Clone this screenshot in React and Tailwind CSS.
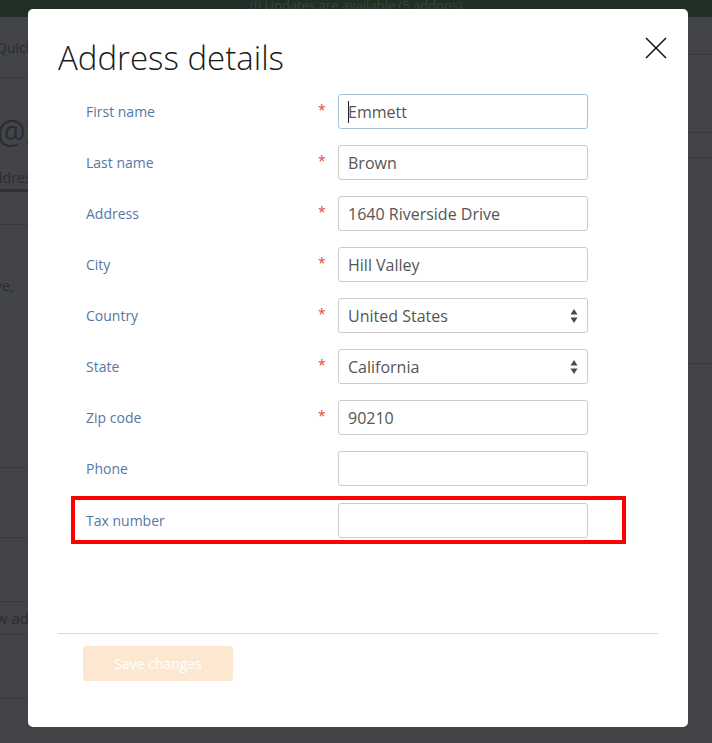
import React from 'react';

const fields = [
  { label: 'First name', value: 'Emmett', required: true, focused: true },
  { label: 'Last name', value: 'Brown', required: true },
  { label: 'Address', value: '1640 Riverside Drive', required: true },
  { label: 'City', value: 'Hill Valley', required: true },
  { label: 'Country', value: 'United States', required: true, select: true },
  { label: 'State', value: 'California', required: true, select: true },
  { label: 'Zip code', value: '90210', required: true },
  { label: 'Phone', value: '' },
];

// Flechas arriba/abajo del select nativo
const SelectArrows = () => (
  <svg width="8" height="16" viewBox="0 0 8 16" className="shrink-0">
    <path d="M4 1 L7.5 6.5 L0.5 6.5 Z" fill="#4a4a4a" />
    <path d="M4 15 L7.5 9.5 L0.5 9.5 Z" fill="#4a4a4a" />
  </svg>
);

const FieldRow = ({ field }) => (
  <div className="flex items-center h-[51px]">
    <label className="w-[232px] text-[14px] text-[#5677a3]">{field.label}</label>
    <span className="w-[20px] text-[14px] text-[#e8463c] leading-none -mt-[4px]">
      {field.required ? '*' : ''}
    </span>
    <div
      className={`w-[250px] h-[35px] rounded-[3px] border bg-white flex items-center pl-[9px] pr-[9px] ${
        field.focused ? 'border-[#a9c2d9]' : 'border-[#cccccc]'
      }`}
    >
      {field.focused && <span className="w-px h-[22px] bg-[#222] -mr-px" />}
      <span className="flex-1 text-[16px] text-[#555555]">{field.value}</span>
      {field.select && <SelectArrows />}
    </div>
  </div>
);

export default function App() {
  return (
    <div className="relative w-[712px] h-[743px] overflow-hidden bg-[#424448] font-['Open_Sans',sans-serif]">
      {/* Página de fondo (tapada por el modal) */}
      <div className="h-[17px] bg-[#222f26] flex justify-center items-start">
        <span className="text-[13px] text-[#38473c] -mt-[4px]">(!) Updates are available (5 addons)</span>
      </div>
      <div className="flex">
        <div className="w-[28px] shrink-0 overflow-hidden text-[#2a2c30]">
          <div className="h-[61px] border-b border-[#393b3f] flex items-center">
            <span className="text-[14px] whitespace-nowrap -ml-[4px]">Quick</span>
          </div>
          <div className="h-[70px] flex items-end">
            <span className="text-[32px] whitespace-nowrap -ml-[3px] leading-none">@x</span>
          </div>
          <div className="h-[44px] border-b-[3px] border-[#2f3135] flex items-end pb-[1px]">
            <span className="text-[14px] whitespace-nowrap -ml-[6px]">ddress</span>
          </div>
          <div className="h-[33px] border-b border-[#393b3f]" />
          <div className="h-[243px] pt-[48px] border-b border-[#393b3f]">
            <span className="text-[14px] whitespace-nowrap -ml-[5px]">ve,</span>
          </div>
          <div className="h-[70px] border-b border-[#393b3f]" />
          <div className="h-[64px] border-b border-[#393b3f]" />
          <div className="h-[33px] border-b border-[#393b3f] flex items-center">
            <span className="text-[15px] whitespace-nowrap -ml-[4px]">w address</span>
          </div>
          <div className="h-[64px] border-b border-[#393b3f]" />
        </div>
        <div className="flex-1" />
        <div className="w-[24px] shrink-0">
          <div className="h-[38px] border-b border-[#393b3f]" />
          <div className="h-[78px] border-b border-[#393b3f]" />
          <div className="h-[25px] border-b border-[#393b3f]" />
          <div className="h-[206px] border-b border-[#393b3f]" />
        </div>
      </div>

      {/* Modal */}
      <div className="absolute left-[28px] top-[9px] w-[660px] h-[718px] bg-white rounded-[5px] px-[30px]">
        <button className="absolute right-[19px] top-[26px] p-0" aria-label="Close">
          <svg width="26" height="26" viewBox="0 0 26 26">
            <path d="M3 3 L23 23 M23 3 L3 23" stroke="#111" strokeWidth="1.5" />
          </svg>
        </button>
        <h1 className="pt-[27px] text-[33px] leading-[44px] text-[#1a1a1a] font-light">
          Address details
        </h1>
        <div className="mt-[6px] pl-[28px]">
          {fields.map(f => (
            <FieldRow key={f.label} field={f} />
          ))}
          {/* Fila resaltada con marco rojo */}
          <div className="mt-[2px] -ml-[15px] w-[555px] h-[48px] border-[4px] border-[#ff0000] flex items-center pl-[11px]">
            <label className="w-[252px] text-[14px] text-[#5677a3]">Tax number</label>
            <div className="w-[250px] h-[35px] rounded-[3px] border border-[#cccccc]" />
          </div>
        </div>
        <div className="mt-[89px] border-t border-[#d9d9d9]" />
        <div className="pt-[12px] pl-[25px]">
          <button className="w-[150px] h-[35px] rounded-[3px] bg-[#fce8d1] text-white text-[14px]">
            Save changes
          </button>
        </div>
      </div>
    </div>
  );
}
